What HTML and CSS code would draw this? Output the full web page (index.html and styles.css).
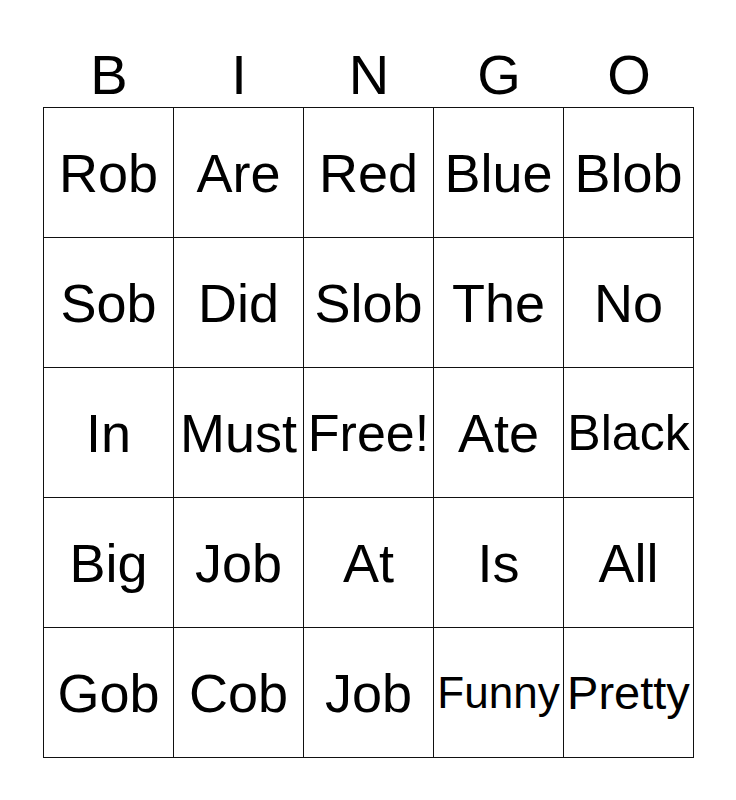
FILE: index.html
```html
<!DOCTYPE html>
<html>
<head>
<meta charset="utf-8">
<link rel="stylesheet" href="styles.css">
</head>
<body>
<div class="card">
  <div class="head">
    <div class="letter">B</div>
    <div class="letter">I</div>
    <div class="letter">N</div>
    <div class="letter">G</div>
    <div class="letter">O</div>
  </div>
  <div class="board">
    <div class="cell">Rob</div>
    <div class="cell">Are</div>
    <div class="cell">Red</div>
    <div class="cell">Blue</div>
    <div class="cell">Blob</div>
    <div class="cell">Sob</div>
    <div class="cell">Did</div>
    <div class="cell">Slob</div>
    <div class="cell">The</div>
    <div class="cell">No</div>
    <div class="cell">In</div>
    <div class="cell">Must</div>
    <div class="cell s52">Free!</div>
    <div class="cell">Ate</div>
    <div class="cell s50">Black</div>
    <div class="cell">Big</div>
    <div class="cell">Job</div>
    <div class="cell">At</div>
    <div class="cell">Is</div>
    <div class="cell">All</div>
    <div class="cell">Gob</div>
    <div class="cell">Cob</div>
    <div class="cell">Job</div>
    <div class="cell s44">Funny</div>
    <div class="cell s47">Pretty</div>
  </div>
</div>
</body>
</html>
```
FILE: styles.css
```css
html, body {
  margin: 0;
  padding: 0;
  background: #ffffff;
}
body {
  font-family: "Liberation Sans", Arial, sans-serif;
  color: #000;
}
.card {
  padding-top: 43px;
  padding-left: 43px;
  width: 651px;
}
.head {
  display: grid;
  grid-template-columns: repeat(5, 130px);
  height: 64px;
  padding-left: 1px;
}
.letter {
  display: flex;
  align-items: center;
  justify-content: center;
  font-size: 56px;
  line-height: 1;
}
.board {
  display: grid;
  grid-template-columns: repeat(5, 130px);
  grid-auto-rows: 130px;
  border-left: 1px solid #111;
  border-top: 1px solid #111;
  width: 650px;
}
.cell {
  display: flex;
  align-items: center;
  justify-content: center;
  border-right: 1px solid #111;
  border-bottom: 1px solid #111;
  font-size: 54px;
  white-space: nowrap;
  overflow: visible;
}
.s52 { font-size: 52px; }
.s50 { font-size: 50px; }
.s47 { font-size: 47px; }
.s44 { font-size: 44px; }
```
